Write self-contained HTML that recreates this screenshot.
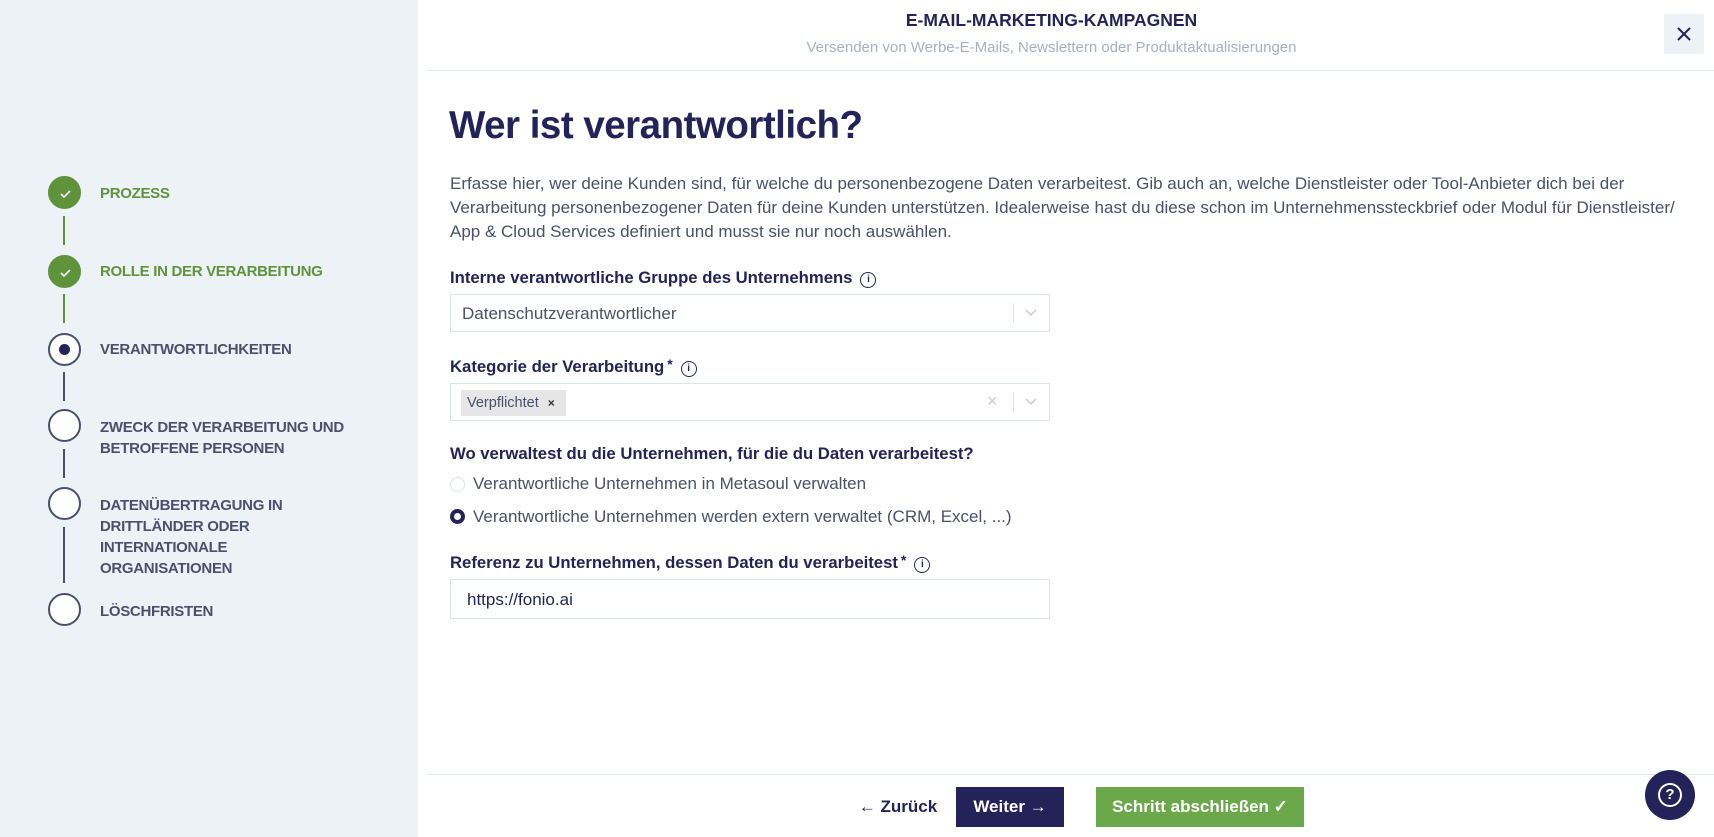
<!DOCTYPE html>
<html><head><meta charset="utf-8"><style>
*{box-sizing:border-box;margin:0;padding:0}
body{width:1714px;height:837px;overflow:hidden;font-family:"Liberation Sans",sans-serif;background:#fff;position:relative;color:#23235a}
.side{position:absolute;left:0;top:0;width:418px;height:837px;background:#edf2f7}
.c{position:absolute;left:48px;width:33px;height:33px;border-radius:50%;border:2px solid #4a5069;background:#fff}
.c.g{background:#5e933b;border-color:#5e933b}
.c.g svg{position:absolute;left:9px;top:9px}
.c.a::after{content:"";position:absolute;left:9px;top:9px;width:11px;height:11px;border-radius:50%;background:#23235a}
.ln{position:absolute;left:63px;width:2px;background:#4a5069}
.ln.g{background:#5e933b}
.st{position:absolute;left:100px;font-size:15px;font-weight:bold;line-height:21px;color:#4a5069;letter-spacing:-0.3px}
.st.g{color:#5e933b}
.abs{position:absolute}
.hdr{position:absolute;left:427px;right:0;top:0;height:71px;border-bottom:1px solid #e2e8f0}
.lab{position:absolute;left:450px;font-size:16.7px;font-weight:bold;color:#23235a;white-space:nowrap}
.info{display:inline-block;width:16px;height:16px;border:1.7px solid #23235a;border-radius:50%;font-size:10px;text-align:center;line-height:13px;font-weight:bold;vertical-align:1px;margin-left:8px}
.ast{font-size:14px;position:relative;top:-3px;margin-left:3px}
.box{position:absolute;left:450px;width:600px;border:1px solid #dde3ec;background:#fff}
.ptxt{font-size:17px;color:#4a5069;white-space:nowrap}
.btn{position:absolute;top:787px;height:40px;font-size:17px;font-weight:bold;color:#fff;display:flex;align-items:center;justify-content:center;white-space:nowrap}
</style></head><body>
<div class="side">
 <div class="c g" style="top:176px"><svg width="13" height="13" viewBox="0 0 13 13"><path d="M2 7l3 3 6-6" stroke="#fff" stroke-width="1.6" fill="none"/></svg></div>
 <div class="ln g" style="top:216px;height:29px"></div>
 <div class="st g" style="top:183px">PROZESS</div>
 <div class="c g" style="top:255px"><svg width="13" height="13" viewBox="0 0 13 13"><path d="M2 7l3 3 6-6" stroke="#fff" stroke-width="1.6" fill="none"/></svg></div>
 <div class="ln g" style="top:294px;height:29px"></div>
 <div class="st g" style="top:261px">ROLLE IN DER VERARBEITUNG</div>
 <div class="c a" style="top:333px"></div>
 <div class="ln" style="top:372px;height:29px"></div>
 <div class="st" style="top:339px">VERANTWORTLICHKEITEN</div>
 <div class="c" style="top:409px"></div>
 <div class="ln" style="top:449px;height:29px"></div>
 <div class="st" style="top:417px">ZWECK DER VERARBEITUNG UND<br>BETROFFENE PERSONEN</div>
 <div class="c" style="top:487px"></div>
 <div class="ln" style="top:527px;height:56px"></div>
 <div class="st" style="top:495px">DATENÜBERTRAGUNG IN<br>DRITTLÄNDER ODER<br>INTERNATIONALE<br>ORGANISATIONEN</div>
 <div class="c" style="top:593px"></div>
 <div class="st" style="top:601px">LÖSCHFRISTEN</div>
</div>
<div class="hdr"></div>
<div class="abs" style="left:427px;right:38px;top:10px;text-align:center;font-size:17.5px;font-weight:bold">E-MAIL-MARKETING-KAMPAGNEN</div>
<div class="abs" style="left:427px;right:38px;top:39px;text-align:center;font-size:15px;color:#a7b0c0">Versenden von Werbe-E-Mails, Newslettern oder Produktaktualisierungen</div>
<div class="abs" style="left:1664px;top:14px;width:40px;height:40px;background:#edf2f7;display:flex;align-items:center;justify-content:center"><svg width="14" height="14"><path d="M1 1L13 13M13 1L1 13" stroke="#23235a" stroke-width="2"/></svg></div>
<div class="abs" style="left:449px;top:104px;font-size:38.5px;font-weight:bold;letter-spacing:-0.5px">Wer ist verantwortlich?</div>
<div class="abs ptxt" style="left:450px;top:172px;width:1250px;line-height:24px">Erfasse hier, wer deine Kunden sind, für welche du personenbezogene Daten verarbeitest. Gib auch an, welche Dienstleister oder Tool-Anbieter dich bei der<br>Verarbeitung personenbezogener Daten für deine Kunden unterstützen. Idealerweise hast du diese schon im Unternehmenssteckbrief oder Modul für Dienstleister/<br>App &amp; Cloud Services definiert und musst sie nur noch auswählen.</div>
<div class="lab" style="top:268px">Interne verantwortliche Gruppe des Unternehmens<span class="info">i</span></div>
<div class="box" style="top:294px;height:38px"><div class="abs ptxt" style="left:11px;top:9px">Datenschutzverantwortlicher</div><div class="abs" style="left:562px;top:8px;width:1px;height:20px;background:#dde3ec"></div><svg class="abs" style="left:574px;top:14px" width="12" height="8"><path d="M1 1l5 5 5-5" stroke="#ccc" stroke-width="1.5" fill="none"/></svg></div>
<div class="lab" style="top:357px">Kategorie der Verarbeitung<span class="ast">*</span><span class="info">i</span></div>
<div class="box" style="top:383px;height:38px"><div class="abs" style="left:10px;top:6px;height:26px;width:105px;background:#e6e6e6;font-size:14.5px;color:#4a5069;padding:5px 0 0 6px;white-space:nowrap">Verpflichtet <span style="font-size:12px;font-weight:bold;color:#333;margin-left:5px">×</span></div><div class="abs" style="left:536px;top:7px;color:#ccc;font-size:18px">×</div><div class="abs" style="left:562px;top:8px;width:1px;height:20px;background:#dde3ec"></div><svg class="abs" style="left:574px;top:14px" width="12" height="8"><path d="M1 1l5 5 5-5" stroke="#ccc" stroke-width="1.5" fill="none"/></svg></div>
<div class="lab" style="top:444px">Wo verwaltest du die Unternehmen, für die du Daten verarbeitest?</div>
<div class="abs" style="left:450px;top:477px;width:15px;height:15px;border:1.5px solid #dde3ec;border-radius:50%"></div>
<div class="abs ptxt" style="left:473px;top:474px">Verantwortliche Unternehmen in Metasoul verwalten</div>
<div class="abs" style="left:450px;top:509px;width:15px;height:15px;border:4.5px solid #23235a;border-radius:50%"></div>
<div class="abs ptxt" style="left:473px;top:507px">Verantwortliche Unternehmen werden extern verwaltet (CRM, Excel, ...)</div>
<div class="lab" style="top:553px">Referenz zu Unternehmen, dessen Daten du verarbeitest<span class="ast">*</span><span class="info">i</span></div>
<div class="box" style="top:579px;height:40px"><div class="abs ptxt" style="left:16px;top:10px;color:#23235a">https://fonio.ai</div></div>
<div class="abs" style="left:427px;right:0;top:774px;height:1px;background:#e2e8f0"></div>
<div class="btn" style="left:848px;width:100px;color:#23235a">← Zurück</div>
<div class="btn" style="left:956px;width:108px;background:#23235a">Weiter →</div>
<div class="btn" style="left:1096px;width:208px;background:#6aa84a">Schritt abschließen ✓</div>
<div class="abs" style="left:1645px;top:770px;width:50px;height:50px;border-radius:50%;background:#23235a;display:flex;align-items:center;justify-content:center"><div style="width:24px;height:24px;border:2.5px solid #fff;border-radius:50%;color:#fff;font-size:15px;font-weight:bold;text-align:center;line-height:20px">?</div></div>
</body></html>
